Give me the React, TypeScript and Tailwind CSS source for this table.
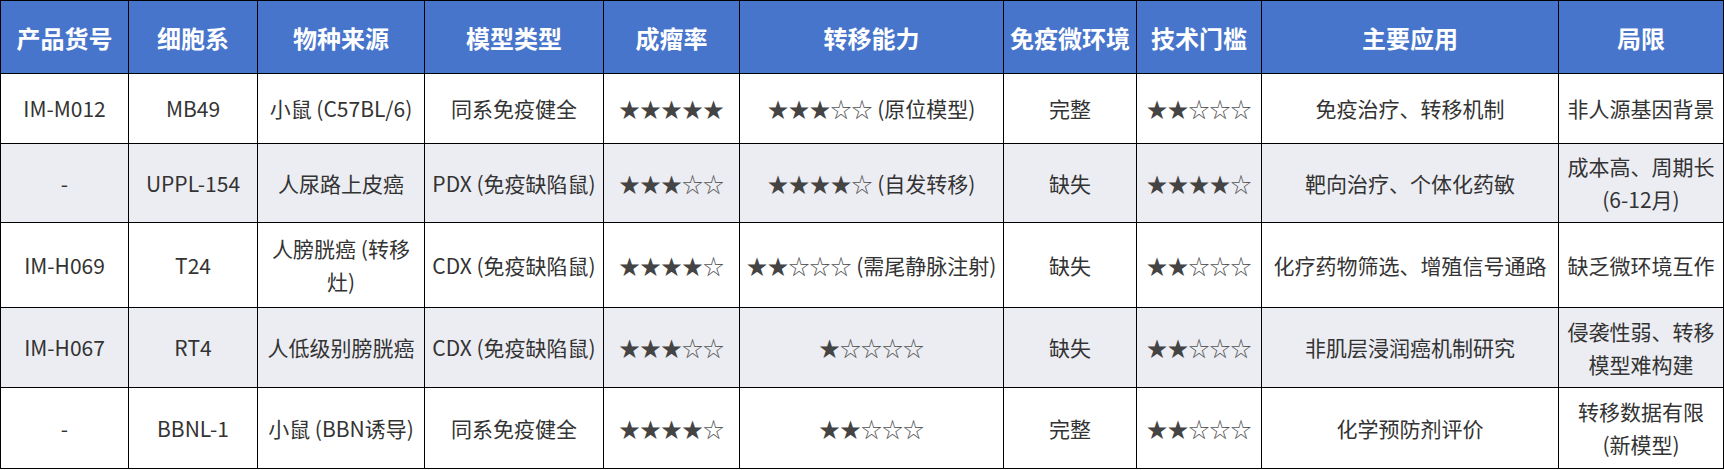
import React from "react";

const cols = [128, 129, 167, 179, 136, 264, 133, 125, 297, 165];

const headers = ["产品货号", "细胞系", "物种来源", "模型类型", "成瘤率", "转移能力", "免疫微环境", "技术门槛", "主要应用", "局限"];

const rows: { h: string; cells: string[] }[] = [
  {
    h: "h-[70px]",
    cells: ["IM-M012", "MB49", "小鼠 (C57BL/6)", "同系免疫健全", "★★★★★", "★★★☆☆ (原位模型)", "完整", "★★☆☆☆", "免疫治疗、转移机制", "非人源基因背景"],
  },
  {
    h: "h-[79px]",
    cells: ["-", "UPPL-154", "人尿路上皮癌", "PDX (免疫缺陷鼠)", "★★★☆☆", "★★★★☆ (自发转移)", "缺失", "★★★★☆", "靶向治疗、个体化药敏", "成本高、周期长 (6-12月)"],
  },
  {
    h: "h-[85px]",
    cells: ["IM-H069", "T24", "人膀胱癌 (转移灶)", "CDX (免疫缺陷鼠)", "★★★★☆", "★★☆☆☆ (需尾静脉注射)", "缺失", "★★☆☆☆", "化疗药物筛选、增殖信号通路", "缺乏微环境互作"],
  },
  {
    h: "h-[80px]",
    cells: ["IM-H067", "RT4", "人低级别膀胱癌", "CDX (免疫缺陷鼠)", "★★★☆☆", "★☆☆☆☆", "缺失", "★★☆☆☆", "非肌层浸润癌机制研究", "侵袭性弱、转移模型难构建"],
  },
  {
    h: "h-[81px]",
    cells: ["-", "BBNL-1", "小鼠 (BBN诱导)", "同系免疫健全", "★★★★☆", "★★☆☆☆", "完整", "★★☆☆☆", "化学预防剂评价", ""],
  },
];

function CellText({ text }: { text: string }) {
  const parts: React.ReactNode[] = [];
  let buf = "";
  let key = 0;
  const flush = () => {
    if (buf) {
      parts.push(<span key={key++}>{buf}</span>);
      buf = "";
    }
  };
  for (const ch of text) {
    if (ch === "★") {
      flush();
      parts.push(
        <span key={key++} className="text-[#444444]">
          ★
        </span>
      );
    } else if (ch === "☆") {
      flush();
      parts.push(
        <span key={key++} className="text-[#555555]">
          ☆
        </span>
      );
    } else {
      buf += ch;
    }
  }
  flush();
  return <>{parts}</>;
}

export default function App() {
  return (
    <div className="w-[1724px] h-[470px] bg-white" style={{ fontFamily: '"Noto Sans CJK SC", "Noto Sans", sans-serif' }}>
      <table className="w-[1723px] table-fixed border-collapse border border-black">
        <colgroup>
          {cols.map((w, i) => (
            <col key={i} style={{ width: w }} />
          ))}
        </colgroup>
        <thead>
          <tr className="h-[73px] bg-[#4775CB]">
            {headers.map((h, i) => (
              <th key={i} className="border border-black px-[6px] text-center align-middle text-[24px] font-bold leading-[33px] text-white">
                {h}
              </th>
            ))}
          </tr>
        </thead>
        <tbody>
          {rows.map((r, ri) => (
            <tr key={ri} className={`${r.h} ${ri % 2 === 1 ? "bg-[#ECEDF2]" : "bg-white"}`}>
              {r.cells.map((c, ci) => (
                <td key={ci} className="border border-black px-[6px] text-center align-middle text-[21px] leading-[33px] text-[#333333]">
                  {ri === 4 && ci === 9 ? "转移数据有限 (新模型)" : <CellText text={c} />}
                </td>
              ))}
            </tr>
          ))}
        </tbody>
      </table>
    </div>
  );
}
